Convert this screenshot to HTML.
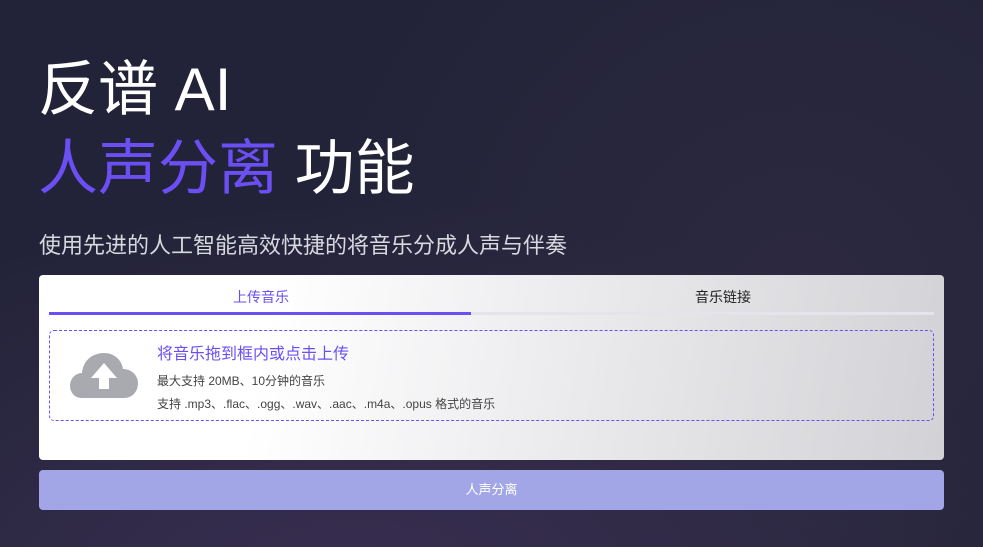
<!DOCTYPE html>
<html><head><meta charset="utf-8"><style>
*{margin:0;padding:0;box-sizing:border-box}
body{width:983px;height:547px;overflow:hidden;font-family:"Liberation Sans","Noto Sans CJK SC",sans-serif;
background:radial-gradient(ellipse 700px 400px at 350px 600px,#3a2f52 0%,rgba(58,47,82,0) 100%),radial-gradient(ellipse 500px 500px at 800px 300px,#2c2940 0%,rgba(44,41,64,0) 100%),#222338;position:relative}
.t1{position:absolute;left:38px;top:54px;font-size:60px;color:#fff;line-height:72px;white-space:nowrap}
.t2{position:absolute;left:38px;top:131px;font-size:60px;color:#fff;line-height:76px;white-space:nowrap}
.t2 span{color:#6b4ff5}
.sub{position:absolute;left:39px;top:228px;font-size:22px;color:#d8d8e0;white-space:nowrap}
.card{position:absolute;left:39px;top:275px;width:905px;height:185px;border-radius:4px;background:linear-gradient(100deg,#fff 25%,#f0f0f2 50%,#d2d2d6 100%)}
.tab{position:absolute;top:12px;font-size:14px}
.line{position:absolute;left:10px;top:37px;width:885px;height:3px;background:#e4e4ec}
.line i{position:absolute;left:0;top:0;width:422px;height:3px;background:#6b4ff5}
.drop{position:absolute;left:10px;top:55px;width:885px;height:91px;border:1px dashed #6b4ff5;border-radius:5px}
.btn{position:absolute;left:39px;top:470px;width:905px;height:40px;border-radius:4px;background:#a2a5e6;color:#fff;font-size:13px;text-align:center;line-height:40px}
</style></head><body>
<div class="t1">反谱 AI</div>
<div class="t2"><span>人声分离</span> 功能</div>
<div class="sub">使用先进的人工智能高效快捷的将音乐分成人声与伴奏</div>
<div class="card">
<div class="tab" style="left:194px;color:#6b4ff5">上传音乐</div>
<div class="tab" style="left:656px;color:#222">音乐链接</div>
<div class="line"><i></i></div>
<div class="drop">
<svg style="position:absolute;left:20px;top:20px" width="68" height="48" viewBox="0 0 68 48">
<path d="M12 47 C2 47 0 38 0 35 C0 27 6 22 12 22 C13 10 22 2 34 2 C45 2 52 10 53 18 C62 18 68 25 68 32 C68 41 62 47 54 47 Z" fill="#a8aab0"/>
<path d="M34 12 L47 27 L39 27 L39 38 L29 38 L29 27 L21 27 Z" fill="#fff"/>
</svg>
<div style="position:absolute;left:107px;top:9px;font-size:16px;color:#6b4ff5">将音乐拖到框内或点击上传</div>
<div style="position:absolute;left:107px;top:41px;font-size:12px;color:#444">最大支持 20MB、10分钟的音乐</div>
<div style="position:absolute;left:107px;top:64px;font-size:12px;color:#444">支持 .mp3、.flac、.ogg、.wav、.aac、.m4a、.opus 格式的音乐</div>
</div>
</div>
<div class="btn">人声分离</div>
</body></html>
